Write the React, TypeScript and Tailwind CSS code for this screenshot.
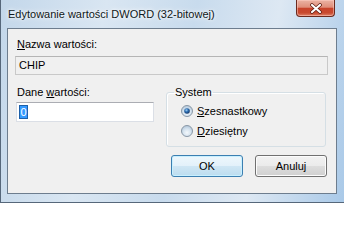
import React from "react";

function Radio({ checked, id }: { checked: boolean; id: string }) {
  return (
    <svg width="12" height="12" viewBox="0 0 12 12" className="shrink-0">
      <defs>
        <radialGradient id={`f${id}`} cx="0.5" cy="0.65" r="0.6">
          <stop offset="0%" stopColor="#f4f8fc" />
          <stop offset="60%" stopColor="#d4e2ee" />
          <stop offset="100%" stopColor="#b6c9dc" />
        </radialGradient>
        <radialGradient id={`d${id}`} cx="0.4" cy="0.35" r="0.7">
          <stop offset="0%" stopColor="#9fd0f5" />
          <stop offset="45%" stopColor="#2a6cb0" />
          <stop offset="100%" stopColor="#14305e" />
        </radialGradient>
      </defs>
      <circle cx="6" cy="6" r="5.5" fill={`url(#f${id})`} stroke="#8a98a6" strokeWidth="1" />
      {checked && <circle cx="6" cy="6" r="2.8" fill={`url(#d${id})`} />}
    </svg>
  );
}

export default function App() {
  return (
    <div className="w-[344px] h-[203px] overflow-hidden flex flex-col border-l border-b border-[#56677a] bg-[linear-gradient(100deg,#c3d7ea_0%,#d9e6f2_28%,#c8dbed_52%,#dde8f3_74%,#a9c9e8_100%)] font-['Liberation_Sans',Arial,sans-serif] text-black">
      <div className="h-[28px] flex justify-between items-start shrink-0">
        <span className="pt-[7px] pl-[7px] text-[11px] leading-[14px] text-[#101820] [text-shadow:0_0_6px_#fff,0_0_3px_#fff]">
          Edytowanie wartości DWORD (32-bitowej)
        </span>
        <div className="mr-[9px] w-[39px] h-[17px] rounded-b-[4px] border border-t-0 border-[#6b2a1e] bg-[linear-gradient(to_bottom,#ebb3a4_0%,#df8e7a_45%,#c8432b_52%,#c84a2f_80%,#e08268_100%)] flex items-center justify-center shadow-[inset_0_0_0_1px_rgba(255,210,200,0.5)]">
          <svg width="14" height="11" viewBox="0 0 14 11">
            <path d="M3 2 L11 9 M11 2 L3 9" stroke="#5a1a10" strokeWidth="3.6" strokeLinecap="round" />
            <path d="M3 2 L11 9 M11 2 L3 9" stroke="#ffffff" strokeWidth="2.2" strokeLinecap="round" />
          </svg>
        </div>
      </div>

      <div className="ml-[6px] mr-[7px] h-[166px] shrink-0 border border-[#6d7d8e] bg-[#f0f0f0] flex flex-col text-[11px] leading-[13px]">
        <div className="mt-[9px] ml-[9px]">
          <span className="underline underline-offset-1">N</span>azwa wartości:
        </div>
        <div className="mt-[5px] ml-[7px] w-[313px] h-[19px] border border-[#c9c9c9] border-t-[#b5b5b5] bg-[#f0f0f0] pl-[3px] flex items-center">
          CHIP
        </div>

        <div className="mt-[11px] ml-[8px] flex items-start">
          <div className="flex flex-col w-[138px]">
            <div className="pl-[1px] h-[13px]">
              Dane <span className="underline underline-offset-1">w</span>artości:
            </div>
            <div className="mt-[3px] h-[20px] border border-[#dbdfe6] border-t-[#abadb3] bg-white pl-[3px] flex items-center">
              <span className="bg-[#3399ff] text-white px-[0.5px] leading-[12px] outline outline-1 outline-[#1c5fa8]">0</span>
            </div>
          </div>
          <fieldset className="ml-[12px] w-[160px] h-[61px] border border-[#d5dfe5] rounded-[3px] shadow-[inset_1px_1px_0_#fff]">
            <legend className="ml-[7px] px-[1px] leading-[13px]">System</legend>
            <div className="pt-[2px] pl-[14px] flex flex-col">
              <div className="h-[20px] flex items-center gap-[4px]">
                <Radio checked id="a" />
                <span>
                  <span className="underline underline-offset-1">S</span>zesnastkowy
                </span>
              </div>
              <div className="h-[20px] flex items-center gap-[4px]">
                <Radio checked={false} id="b" />
                <span>
                  <span className="underline underline-offset-1">D</span>ziesiętny
                </span>
              </div>
            </div>
          </fieldset>
        </div>

        <div className="mt-[8px] pr-[9px] flex justify-end gap-[12px]">
          <div className="w-[72px] h-[22px] rounded-[3px] border border-[#3c7fb1] bg-[linear-gradient(to_bottom,#eef7fc_0%,#e3f1fa_48%,#cfe6f4_52%,#bcdcef_100%)] shadow-[inset_0_0_0_1px_#c8f0ff] flex items-center justify-center">
            OK
          </div>
          <div className="w-[72px] h-[22px] rounded-[3px] border border-[#707070] bg-[linear-gradient(to_bottom,#f2f2f2_0%,#ebebeb_48%,#dddddd_52%,#cfcfcf_100%)] shadow-[inset_0_0_0_1px_#fcfcfc] flex items-center justify-center">
            Anuluj
          </div>
        </div>
      </div>
    </div>
  );
}
